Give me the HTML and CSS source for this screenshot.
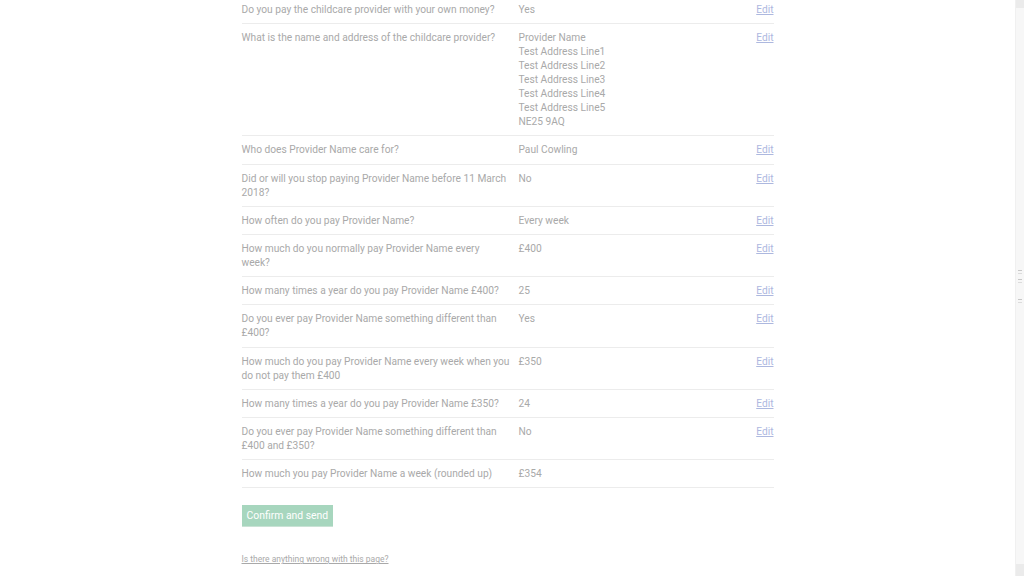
FILE: index.html
```html
<!DOCTYPE html>
<html lang="en">
<head>
<meta charset="utf-8">
<title>Check your answers</title>
<link rel="stylesheet" href="styles.css">
</head>
<body>
<div class="page">
  <main class="main">
    <div class="container">
      <dl class="summary">
        <div class="row">
          <dt class="key">Do you pay the childcare provider with your own money?</dt>
          <dd class="value">Yes</dd>
          <dd class="action"><a href="#">Edit</a></dd>
        </div>
        <div class="row">
          <dt class="key">What is the name and address of the childcare provider?</dt>
          <dd class="value">Provider Name<br>Test Address Line1<br>Test Address Line2<br>Test Address Line3<br>Test Address Line4<br>Test Address Line5<br>NE25 9AQ</dd>
          <dd class="action"><a href="#">Edit</a></dd>
        </div>
        <div class="row">
          <dt class="key">Who does Provider Name care for?</dt>
          <dd class="value">Paul Cowling</dd>
          <dd class="action"><a href="#">Edit</a></dd>
        </div>
        <div class="row">
          <dt class="key">Did or will you stop paying Provider Name before 11 March 2018?</dt>
          <dd class="value">No</dd>
          <dd class="action"><a href="#">Edit</a></dd>
        </div>
        <div class="row">
          <dt class="key">How often do you pay Provider Name?</dt>
          <dd class="value">Every week</dd>
          <dd class="action"><a href="#">Edit</a></dd>
        </div>
        <div class="row">
          <dt class="key">How much do you normally pay Provider Name every week?</dt>
          <dd class="value">£400</dd>
          <dd class="action"><a href="#">Edit</a></dd>
        </div>
        <div class="row">
          <dt class="key">How many times a year do you pay Provider Name £400?</dt>
          <dd class="value">25</dd>
          <dd class="action"><a href="#">Edit</a></dd>
        </div>
        <div class="row">
          <dt class="key">Do you ever pay Provider Name something different than £400?</dt>
          <dd class="value">Yes</dd>
          <dd class="action"><a href="#">Edit</a></dd>
        </div>
        <div class="row">
          <dt class="key">How much do you pay Provider Name every week when you do not pay them £400</dt>
          <dd class="value">£350</dd>
          <dd class="action"><a href="#">Edit</a></dd>
        </div>
        <div class="row">
          <dt class="key">How many times a year do you pay Provider Name £350?</dt>
          <dd class="value">24</dd>
          <dd class="action"><a href="#">Edit</a></dd>
        </div>
        <div class="row">
          <dt class="key">Do you ever pay Provider Name something different than £400 and £350?</dt>
          <dd class="value">No</dd>
          <dd class="action"><a href="#">Edit</a></dd>
        </div>
        <div class="row">
          <dt class="key">How much you pay Provider Name a week (rounded up)</dt>
          <dd class="value">£354</dd>
          <dd class="action"></dd>
        </div>
      </dl>
      <button class="button" type="button">Confirm and send</button>
      <p class="report"><a href="#">Is there anything wrong with this page?</a></p>
    </div>
  </main>
  <div class="scrollbar">
    <div class="sb-btn"></div>
    <div class="sb-track">
      <span class="sb-mark m1"></span>
      <span class="sb-mark m2"></span>
      <span class="sb-mark m3"></span>
    </div>
    <div class="sb-btn sb-bottom"></div>
  </div>
</div>
</body>
</html>
```
FILE: styles.css
```css
html, body {
  margin: 0;
  padding: 0;
  height: 576px;
  overflow: hidden;
  background: #ffffff;
}

body {
  font-family: Roboto, "Liberation Sans", Arial, sans-serif;
  color: #a9a9a9;
}

.page {
  display: flex;
  height: 576px;
}

.main {
  flex: 1;
  display: flex;
  justify-content: center;
}

.container {
  width: 532px;
}

.summary {
  margin: -4px 0 0 0;
  padding: 0;
}

.row {
  display: grid;
  grid-template-columns: 268px 1fr auto;
  column-gap: 9px;
  padding: 7px 0 6.2px;
  border-bottom: 1px solid #ececec;
  font-size: 10.2px;
  line-height: 14px;
}

.key,
.value,
.action {
  margin: 0;
}

.action a {
  color: #adb8df;
  text-decoration: underline;
}

.button {
  display: block;
  margin-top: 17px;
  height: 21px;
  padding: 0 5px;
  border: none;
  background: #a7d6be;
  color: #ffffff;
  font-family: Roboto, "Liberation Sans", Arial, sans-serif;
  font-size: 10.4px;
  line-height: 21px;
  box-shadow: 0 1px 0 #c9e2d5;
}

.report {
  margin: 28px 0 0;
  font-size: 8.5px;
  line-height: 10px;
}

.report a {
  color: #a9a9a9;
  text-decoration: underline;
}

.scrollbar {
  width: 8px;
  display: flex;
  flex-direction: column;
  background: #f7f7f7;
  border-left: 1px solid #f0f0f0;
}

.sb-btn {
  height: 8px;
  background: #ebebeb;
}

.sb-bottom {
  height: 12px;
}

.sb-track {
  flex: 1;
  position: relative;
}

.sb-mark {
  position: absolute;
  left: 2px;
  width: 4px;
  height: 2px;
  border-top: 1px solid #c8c8c8;
  border-bottom: 1px solid #dcdcdc;
}

.m1 { top: 262px; }
.m2 { top: 271px; }
.m3 { top: 291px; }
```
